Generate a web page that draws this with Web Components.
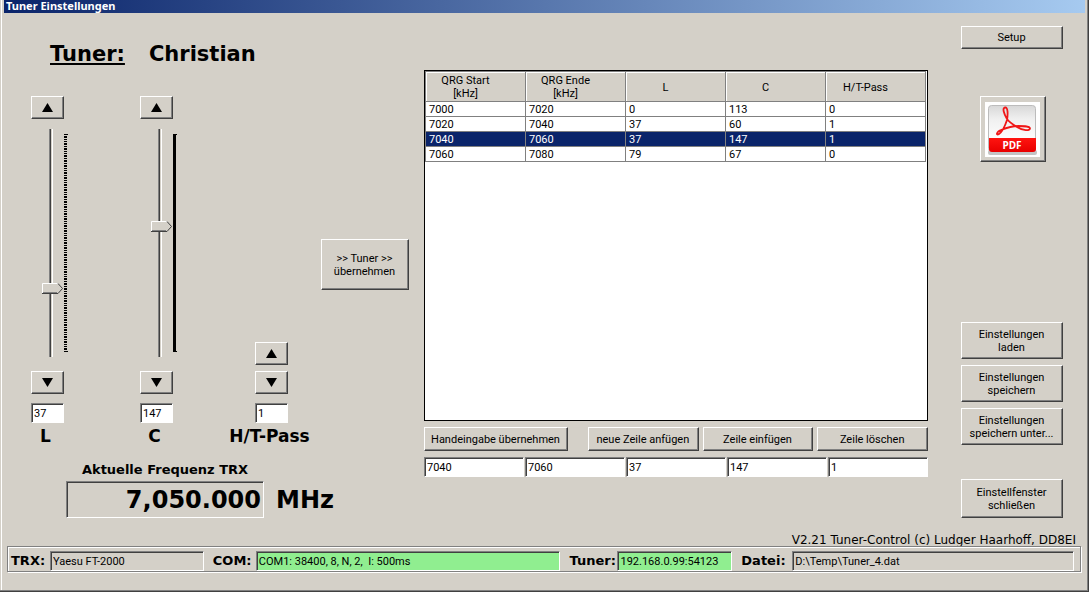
<!DOCTYPE html>
<html lang="de">
<head>
<meta charset="utf-8">
<title>Tuner Einstellungen</title>
<style>
  :root {
    --face: #d4d0c8;
    --shade: #808080;
    --dark: #404040;
    --select: #0a246a;
    --ok: #90ee90;
    --ui: Roboto, "Liberation Sans", Arial, sans-serif;
    --wide: "DejaVu Sans", Verdana, sans-serif;
  }
  body { margin: 0; background: var(--face); color: #000; font: 11px/13px var(--ui); }
</style>
</head>
<body>
<tuner-window></tuner-window>

<template id="push-button">
  <style>
    :host { display: block; height: 24px; }
    button {
      box-sizing: border-box; display: flex; align-items: center; justify-content: center;
      width: 100%; height: 100%; margin: 0; padding: 0 1px 0 0;
      font: inherit; color: inherit; text-align: center; background: var(--face);
      border: 1px solid; border-color: #fff var(--dark) var(--dark) #fff; border-radius: 0;
      box-shadow: inset -1px -1px var(--shade); white-space: nowrap;
    }
  </style>
  <button type="button"><span><slot></slot></span></button>
</template>

<template id="text-field">
  <style>
    :host { display: block; height: 20px; min-width: 0; }
    input {
      box-sizing: border-box; display: block; width: 100%; height: 100%; margin: 0;
      padding: 0 2px; font: inherit; color: inherit; text-align: inherit;
      background: var(--field-fill, #fff); outline: 0;
      border: 1px solid; border-color: var(--shade) #fff #fff var(--shade); border-radius: 0;
      box-shadow: inset 1px 1px var(--dark);
    }
  </style>
  <input type="text">
</template>

<template id="value-slider">
  <style>
    :host { display: flex; height: 228px; }
    input {
      -webkit-appearance: none; appearance: none; writing-mode: vertical-lr; direction: rtl;
      width: 21px; height: 228px; margin: 0; outline: 0;
      background: linear-gradient(90deg, #808080 1px, #404040 1px 2px, #d4d0c8 2px 3px, #fff 3px) 7px 0 / 4px 100% no-repeat;
    }
    input::-webkit-slider-runnable-track { width: 21px; height: 100%; background: none; }
    input::-webkit-slider-thumb {
      -webkit-appearance: none; width: 21px; height: 11px; border: 0;
      background: url("data:image/svg+xml,%3Csvg xmlns='http://www.w3.org/2000/svg' width='21' height='11'%3E%3Cpath d='M0 0H16L21 5.5L16 11H0Z' fill='%23d4d0c8'/%3E%3Cpath d='M.5 10V.5H16' fill='none' stroke='%23fff'/%3E%3Cpath d='M1 9.5H15' fill='none' stroke='%23808080'/%3E%3Cpath d='M0 10.5H16L20.5 5.5L16 .5' fill='none' stroke='%23404040'/%3E%3C/svg%3E") no-repeat;
    }
    svg { display: block; margin: 5px 0 0 1px; }
  </style>
  <input type="range" min="0">
  <svg width="4" height="218" shape-rendering="crispEdges" aria-hidden="true"><path/></svg>
</template>

<template id="tuner-channel">
  <style>
    :host { display: flex; flex-direction: column; align-items: center; width: 33px; }
    push-button { width: 33px; height: 23px; }
    push-button svg { display: block; }
    value-slider { align-self: flex-start; margin: 10px 0 14px 11px; }
    .stack { margin-bottom: 6px; }
    text-field { width: 33px; margin: 9px 0 3px; }
    .name { font: bold 17px/20px var(--wide); white-space: nowrap; padding-right: 4px; }
  </style>
  <push-button class="up"><svg width="11" height="9"><path d="M5.5 0L11 9H0Z"/></svg></push-button>
  <push-button class="down"><svg width="11" height="9"><path d="M0 0H11L5.5 9Z"/></svg></push-button>
  <text-field></text-field>
  <span class="name"></span>
</template>

<template id="frequency-panel">
  <style>
    :host { display: block; font: bold 24px/28px var(--wide); }
    label { display: block; width: 198px; font: bold 13px/16px var(--wide); text-align: center; margin-bottom: 3px; white-space: nowrap; }
    .row { display: flex; align-items: center; gap: 12px; }
    input {
      box-sizing: border-box; width: 198px; height: 37px; margin: 0; padding: 0 2px; font: inherit; text-align: right;
      background: var(--face); border: 1px solid; border-color: var(--shade) #fff #fff var(--shade);
      box-shadow: inset 1px 1px var(--dark); outline: 0;
    }
  </style>
  <label for="freq">Aktuelle Frequenz TRX</label>
  <div class="row"><input id="freq" type="text" value="7,050.000" readonly><span>MHz</span></div>
</template>

<template id="memory-table">
  <style>
    :host { display: block; box-sizing: border-box; background: #fff; border: 1px solid #000; padding-right: 1px; }
    table { width: 100%; table-layout: fixed; border-collapse: separate; border-spacing: 0; border-left: 1px solid var(--shade); }
    th {
      height: 28px; padding: 1px 20px 0 0; font-weight: normal; background: var(--face);
      border: solid; border-width: 1px 1px 1px 0; border-color: var(--shade);
      box-shadow: inset 1px 1px #fff;
    }
    td { height: 13px; line-height: 13px; padding: 1px 0 0 3px; border: solid var(--shade); border-width: 0 1px 1px 0; }
    tr[aria-selected] td { background: var(--select); color: #fff; }
  </style>
  <table>
    <thead><tr><th>QRG Start<br>[kHz]</th><th>QRG Ende<br>[kHz]</th><th>L</th><th>C</th><th>H/T-Pass</th></tr></thead>
    <tbody></tbody>
  </table>
</template>

<template id="status-field">
  <style>
    :host { display: flex; align-items: center; min-width: 0; }
    label { flex: none; font: bold 13px/16px var(--wide); white-space: nowrap; }
    text-field { flex: 1; --field-fill: var(--face); }
    :host([ok]) text-field { --field-fill: var(--ok); }
  </style>
  <label></label><text-field></text-field>
</template>

<template id="tuner-window">
  <style>
    :host {
      box-sizing: border-box; display: flex; flex-direction: column; min-height: 100vh;
      background: var(--face); border: solid; border-width: 0 1px 1px 0; border-color: var(--dark);
      box-shadow: inset -1px -1px var(--shade), inset 1px 0 var(--face), inset 2px 0 #fff;
    }
    .title {
      margin: 0 3px 0 4px; padding-left: 2px; height: 13px; color: #fff;
      font: bold 11px/11px "Noto Sans", sans-serif;
      background: linear-gradient(90deg, #0a246a, #a6caf0);
    }
    main { flex: 1; display: grid; grid-template-columns: 378px minmax(0, 1fr) 102px; padding: 0 25px 0 31px; }
    h1 { display: flex; gap: 24px; margin: 28px 0 29px 19px; font: bold 21px/26px var(--wide); }
    h1 u { text-underline-offset: 2px; text-decoration-thickness: 2px; }
    .channels { display: grid; grid-template-columns: 109px 115px 66px 88px; align-items: end; }
    .transfer { align-self: start; height: 51px; margin-top: 143px; }
    frequency-panel { margin: 16px 0 0 35px; }
    .center { display: flex; flex-direction: column; margin: 57px 33px 57px 15px; }
    memory-table { flex: 1; min-height: 200px; }
    .actions { display: flex; gap: 4px; margin: 6px 0; }
    .actions push-button { flex: 1; }
    .actions push-button:first-child { flex: none; width: 144px; margin-right: 16px; }
    .entry { display: grid; grid-template-columns: repeat(5, minmax(0, 1fr)); gap: 1px; }
    .side { display: flex; flex-direction: column; gap: 6px; padding: 13px 0 16px; }
    .side push-button { height: 37px; }
    .side .setup { height: 23px; }
    .side .pdf { width: 66px; height: 66px; margin: 41px 0 auto 19px; }
    .side .close { height: 39px; margin-top: 28px; }
    .pdf svg { display: block; }
    .version { font: 12px/12px var(--wide); text-align: right; margin-right: 12px; white-space: nowrap; }
    footer {
      display: flex; gap: 9px; box-sizing: border-box; height: 26px; margin: 0 7px 19px; padding: 4px 6px 0 3px;
      border: 1px solid var(--shade); box-shadow: 1px 1px #fff, inset 1px 1px #fff;
    }
    .trx { flex: 193 1 0; }
    .com { flex: 348 1 0; }
    .net { flex: 163 1 0; }
    .file { flex: 333 1 0; }
  </style>
  <div class="title">Tuner Einstellungen</div>
  <main>
    <section>
      <h1><u>Tuner:</u><span>Christian</span></h1>
      <div class="channels">
        <tuner-channel name="L" value="37" max="127"></tuner-channel>
        <tuner-channel name="C" value="147" max="255"></tuner-channel>
        <tuner-channel name="H/T-Pass" value="1"></tuner-channel>
        <push-button class="transfer">&gt;&gt; Tuner &gt;&gt;<br>übernehmen</push-button>
      </div>
      <frequency-panel></frequency-panel>
    </section>
    <section class="center">
      <memory-table></memory-table>
      <div class="actions">
        <push-button>Handeingabe übernehmen</push-button>
        <push-button>neue Zeile anfügen</push-button>
        <push-button>Zeile einfügen</push-button>
        <push-button>Zeile löschen</push-button>
      </div>
      <div class="entry">
        <text-field label="QRG Start" value="7040"></text-field>
        <text-field label="QRG Ende" value="7060"></text-field>
        <text-field label="L" value="37"></text-field>
        <text-field label="C" value="147"></text-field>
        <text-field label="H/T-Pass" value="1"></text-field>
      </div>
    </section>
    <section class="side">
      <push-button class="setup">Setup</push-button>
      <push-button class="pdf"><svg width="55" height="55" viewBox="0 0 55 55">
        <defs>
          <linearGradient id="paper" x2="0" y2="1"><stop stop-color="#d8d8d8"/><stop offset=".3" stop-color="#f0f0f0"/><stop offset=".8" stop-color="#fff"/></linearGradient>
          <linearGradient id="band" x2="0" y2="1"><stop stop-color="#ff1410"/><stop offset="1" stop-color="#e80000"/></linearGradient>
        </defs>
        <path d="M0 0H55V55H0Z" fill="#fff"/>
        <rect x="3" y="48" width="49" height="5" rx="2" fill="#c4c4c4"/>
        <rect x="3.5" y="3.5" width="47" height="46" rx="3" fill="url(#paper)" stroke="#bcbcbc"/>
        <path d="M4 36H51V47Q51 50 48 50H7Q4 50 4 47Z" fill="url(#band)"/>
        <path d="M22 17C19 12 17 6 20 5.500C23 5 23 12 22 18C20 24 17 30 14 32C11 34 11 30 16 28C21 26 27 24 33 24C40 24 45 24 45 26.500C45 29 38 29 32 25C27 22 24 20 22 17Z" fill="none" stroke="#f01818" stroke-width="1.800"/>
        <text x="27" y="47" text-anchor="middle" font-family="Open Sans, sans-serif" font-weight="bold" font-size="10" fill="#fff">PDF</text>
      </svg></push-button>
      <push-button>Einstellungen<br>laden</push-button>
      <push-button>Einstellungen<br>speichern</push-button>
      <push-button>Einstellungen<br>speichern unter...</push-button>
      <push-button class="close">Einstellfenster<br>schließen</push-button>
    </section>
  </main>
  <div class="version">V2.21 Tuner-Control (c) Ludger Haarhoff, DD8EI</div>
  <footer>
    <status-field class="trx" label="TRX:" space="39" value="Yaesu FT-2000"></status-field>
    <status-field class="com" label="COM:" space="43" value="COM1: 38400, 8, N, 2,  I: 500ms" ok></status-field>
    <status-field class="net" label="Tuner:" space="48" value="192.168.0.99:54123" ok></status-field>
    <status-field class="file" label="Datei:" space="51" value="D:\Temp\Tuner_4.dat"></status-field>
  </footer>
</template>

<script>
class Templated extends HTMLElement {
  constructor() {
    super();
    this.attachShadow({ mode: 'open', delegatesFocus: true })
      .append(document.getElementById(this.localName).content.cloneNode(true));
  }
  $(selector) { return this.shadowRoot.querySelector(selector); }
}

class PushButton extends Templated {
  connectedCallback() {
    const label = this.getAttribute('label');
    if (label) this.$('button').setAttribute('aria-label', label);
  }
}

class TextField extends Templated {
  connectedCallback() {
    const input = this.$('input');
    input.value = this.getAttribute('value') || '';
    input.setAttribute('aria-label', this.getAttribute('label') || '');
    input.readOnly = this.hasAttribute('readonly');
  }
  get value() { return this.$('input').value; }
  set value(v) { this.$('input').value = v; }
}

class ValueSlider extends Templated {
  connectedCallback() {
    const input = this.$('input');
    const max = Number(this.getAttribute('max'));
    input.max = max;
    input.value = this.getAttribute('value');
    input.setAttribute('aria-label', this.getAttribute('label'));
    // one tick per step, the two end ticks a pixel longer
    let d = '';
    for (let i = 0; i <= max; i++) {
      const y = Math.round(i * 217 / max);
      d += `M0 ${y}h${i === 0 || i === max ? 4 : 3}v1H0z`;
    }
    this.$('path').setAttribute('d', d);
  }
  get value() { return Number(this.$('input').value); }
  set value(v) { this.$('input').value = v; }
}

class TunerChannel extends Templated {
  connectedCallback() {
    const name = this.getAttribute('name');
    const value = this.getAttribute('value');
    const up = this.$('.up'), down = this.$('.down'), field = this.$('text-field');
    this.$('.name').textContent = name;
    field.setAttribute('label', name);
    field.setAttribute('value', value);
    field.value = value;
    up.setAttribute('label', name + ' +');
    down.setAttribute('label', name + ' −');
    up.connectedCallback();
    down.connectedCallback();
    let slider = null;
    if (this.hasAttribute('max')) {
      slider = document.createElement('value-slider');
      slider.setAttribute('label', name);
      slider.setAttribute('max', this.getAttribute('max'));
      slider.setAttribute('value', value);
      up.after(slider);
      slider.addEventListener('input', () => { field.value = slider.value; });
    } else {
      up.classList.add('stack');
    }
    const limit = Number(this.getAttribute('max') || 1);
    const step = n => {
      const v = Math.min(limit, Math.max(0, Number(field.value) + n));
      field.value = v;
      if (slider) slider.value = v;
    };
    up.addEventListener('click', () => step(1));
    down.addEventListener('click', () => step(-1));
  }
}

class FrequencyPanel extends Templated {}

class MemoryTable extends Templated {
  connectedCallback() {
    const rows = [[7000, 7020, 0, 113, 0], [7020, 7040, 37, 60, 1], [7040, 7060, 37, 147, 1], [7060, 7080, 79, 67, 0]];
    this.$('tbody').innerHTML = rows.map((row, i) =>
      `<tr${i === 2 ? ' aria-selected="true"' : ''}>${row.map(v => `<td>${v}</td>`).join('')}</tr>`).join('');
  }
}

class StatusField extends Templated {
  connectedCallback() {
    const label = this.$('label'), field = this.$('text-field');
    label.textContent = this.getAttribute('label');
    label.style.width = this.getAttribute('space') + 'px';
    field.setAttribute('label', this.getAttribute('label'));
    field.setAttribute('readonly', '');
    field.setAttribute('value', this.getAttribute('value'));
    field.connectedCallback();
    label.addEventListener('click', () => field.focus());
  }
}

class TunerWindow extends Templated {}

customElements.define('push-button', PushButton);
customElements.define('text-field', TextField);
customElements.define('value-slider', ValueSlider);
customElements.define('tuner-channel', TunerChannel);
customElements.define('frequency-panel', FrequencyPanel);
customElements.define('memory-table', MemoryTable);
customElements.define('status-field', StatusField);
customElements.define('tuner-window', TunerWindow);
</script>
</body>
</html>
